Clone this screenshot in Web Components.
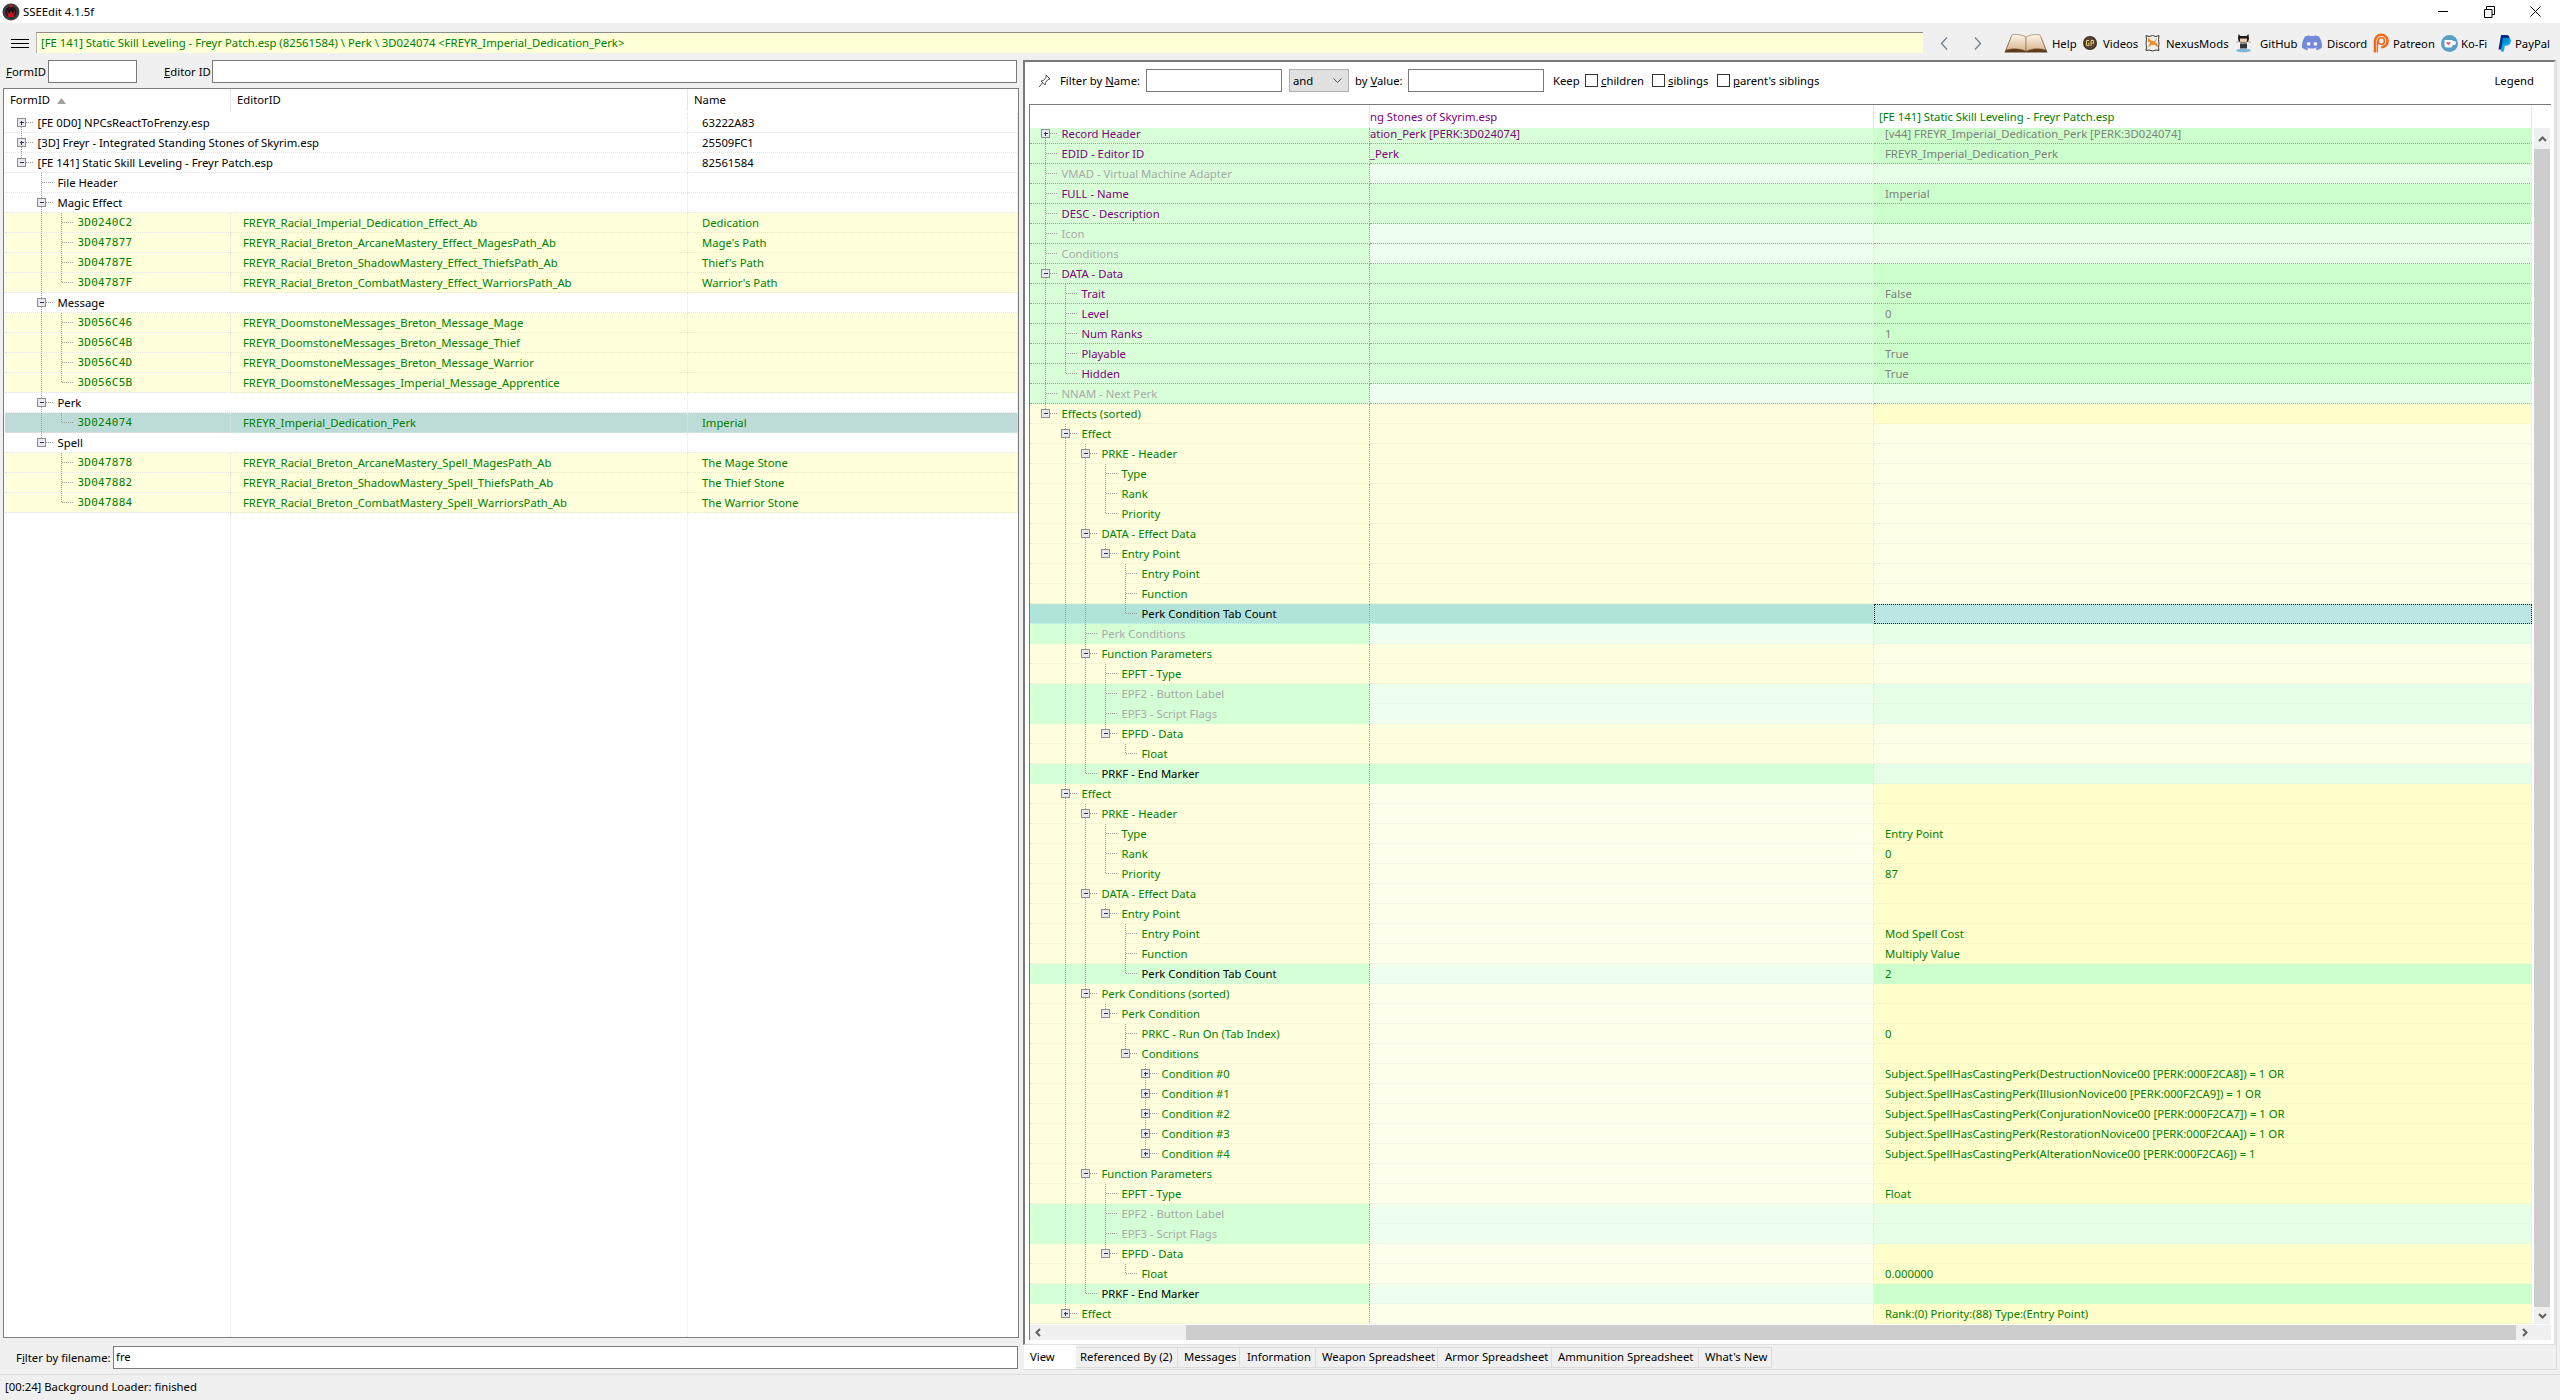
<!doctype html>
<html>
<head>
<meta charset="utf-8">
<title>SSEEdit 4.1.5f</title>
<style>
  html, body { margin: 0; height: 1400px; overflow: hidden; background: #f0f0f0; }
  body { font: 11.3px "Noto Sans", "Open Sans", sans-serif; color: #000; }
</style>
</head>
<body>
<app-shell>
  <win-titlebar></win-titlebar>
  <tool-strip></tool-strip>
  <main-split>
    <left-pane></left-pane>
    <view-pane></view-pane>
  </main-split>
  <status-line>[00:24] Background Loader: finished</status-line>
</app-shell>

<script>
// small base class, every element just stamps its html in an open shadow root
class Base extends HTMLElement {
  constructor() {
    super();
    this.attachShadow({ mode: 'open' });
  }
  connectedCallback() {
    if (!this.shadowRoot.innerHTML) this.shadowRoot.innerHTML = this.html();
    this.ready && this.ready();
  }
}
const simple = (name, html) => customElements.define(name, class extends Base { html() { return html; } });

simple('app-shell', `
  <style>:host { display: flex; flex-direction: column; width: 2560px; height: 1400px; }</style>
  <slot></slot>`);

simple('win-titlebar', `
  <style>
    :host { display: flex; align-items: center; height: 23px; background: #fff; flex: none; }
    svg { display: block; flex: none; }
    .logo { margin: 0 3px 0 2px; }
    .name { flex: 1; }
    .btn { width: 46px; display: flex; justify-content: center; }
  </style>
  <svg class="logo" width="18" height="20" viewBox="0 0 18 20">
    <circle cx="9" cy="10" r="8.5" fill="#3c3c40"/>
    <circle cx="9" cy="10" r="5.5" fill="#1c1416"/>
    <path d="M5 8l2 4 2-3 2 3 2-4-1 7H6z" fill="#c8141e"/>
    <circle cx="9" cy="4" r="1.5" fill="#c8141e"/>
  </svg>
  <span class="name">SSEEdit 4.1.5f</span>
  <div class="btn"><svg width="11" height="11"><path d="M0 5.5h10" stroke="#000"/></svg></div>
  <div class="btn"><svg width="11" height="12"><path d="M2.5 3V.5h8v8H8M.5 3.5h7.500v8h-7.500z" fill="none" stroke="#000"/></svg></div>
  <div class="btn" style="margin-right:2px"><svg width="11" height="11"><path d="M.5.5l10 10M10.500.5l-10 10" stroke="#000"/></svg></div>`);

class IconLink extends Base {
  html() {
    return `
    <style>
      :host { display: flex; align-items: center; flex: none; width: ${this.getAttribute('w')}px; gap: ${this.getAttribute('gap') || 5}px; white-space: nowrap; }
      ::slotted(svg) { display: block; flex: none; }
    </style>
    <slot name="icon"></slot><slot></slot>`;
  }
}
customElements.define('icon-link', IconLink);

simple('tool-strip', `
  <style>
    :host { display: flex; height: 37px; flex: none; background: #f0f0f0; }
    svg { display: block; flex: none; }
    .burger { margin: 16px 7px 0 11px; }
    .crumb {
      width: 1887px; height: 21px; margin-top: 9px; flex: none; box-sizing: border-box;
      background: #ffffd8; color: #008000; border-top: 1px solid #8c8c8c; border-left: 1px solid #b4b4b4;
      padding-left: 4px; line-height: 20px; white-space: nowrap;
    }
    .nav { display: flex; gap: 26px; margin: 14px 0 0 17px; width: 64px; flex: none; }
    .links { display: flex; height: 28px; margin-top: 6px; }
  </style>
  <svg class="burger" width="18" height="10"><path d="M0 .5h18M0 4.500h18M0 8.500h18" stroke="#000"/></svg>
  <div class="crumb">[FE 141] Static Skill Leveling - Freyr Patch.esp (82561584) \\ Perk \\ 3D024074 &lt;FREYR_Imperial_Dedication_Perk&gt;</div>
  <div class="nav">
    <svg width="8" height="13"><path d="M7 .5L1.500 6.500 7 12.500" fill="none" stroke="#6f8094" stroke-width="1.300"/></svg>
    <svg width="8" height="13"><path d="M1 .5l5.500 6L1 12.500" fill="none" stroke="#6f8094" stroke-width="1.300"/></svg>
  </div>
  <div class="links">
    <icon-link w="79" gap="4">
      <svg slot="icon" width="44" height="20" viewBox="0 0 44 20">
        <defs><linearGradient id="pg" x1="0" y1="0" x2="0" y2="1"><stop offset="0" stop-color="#fff6ea"/><stop offset="1" stop-color="#d8b48c"/></linearGradient></defs>
        <path d="M7 4L.5 19.500h43L37 4z" fill="#5c3a1e"/>
        <path d="M22 4C16 1 10 1 8 2L2 17c7-2 14-1.500 20 1z" fill="url(#pg)" stroke="#8a6a48" stroke-width=".6"/>
        <path d="M22 4c6-3 12-3 14-2l6 15c-7-2-14-1.500-20 1z" fill="url(#pg)" stroke="#8a6a48" stroke-width=".6"/>
      </svg>Help</icon-link>
    <icon-link w="62" gap="6">
      <svg slot="icon" width="14" height="16" viewBox="0 0 14 16">
        <circle cx="7" cy="8" r="7" fill="#3a3124"/><circle cx="7" cy="8" r="5.800" fill="#57482f"/>
        <path d="M6 5.500H3.500v5H6V8.300H5M8 10.800V5.500h2.500v2.700H8" fill="none" stroke="#e5c67a" stroke-width="1"/>
      </svg>Videos</icon-link>
    <icon-link w="90" gap="6">
      <svg slot="icon" width="15" height="18" viewBox="0 0 15 18">
        <path d="M1 1.500l3 1 3.500-1 3.500 1 3-1-.5 4 .5 4-.5 4 .5 3-3-.5-3.500 1-3.500-1-3 .5.500-3.500-.5-4 .5-4z" fill="#f4efe6" stroke="#3a3a3a"/>
        <path d="M3 3.500l4 4 1-1 1 1 3-4-2 5 1 1 1-1 1 5-4-3-1 1-1-1-4 3 2-5-1-1-1 1z" fill="#ea8a2a"/>
      </svg>NexusMods</icon-link>
    <icon-link w="67" gap="8">
      <svg slot="icon" width="17" height="20" viewBox="0 0 17 20">
        <path d="M3.500 1l2 2h6l2-2 .5 4.500c0 3-2 4.500-5.500 4.500S3 8.500 3 5.500z" fill="#1c1c1c"/>
        <path d="M5 5.500h7v2.500c0 1-1.500 1.500-3.500 1.500S5 9 5 8z" fill="#eec9a8"/>
        <path d="M5 10.500h7v5H5z" fill="#30343a"/>
        <path d="M1 9h3M13 9h3" stroke="#aaa"/>
        <ellipse cx="8.500" cy="17.500" rx="7.500" ry="1.800" fill="#7fb6d8"/>
      </svg>GitHub</icon-link>
    <icon-link w="71" gap="5">
      <svg slot="icon" width="20" height="16" viewBox="0 0 24 19">
        <path transform="translate(0 -2.800)" fill="#7289da" d="M20.317 4.370a19.790 19.790 0 00-4.885-1.515.074.074 0 00-.079.037c-.211.375-.445.865-.608 1.250-1.845-.276-3.680-.276-5.487 0-.164-.393-.406-.874-.618-1.250a.077.077 0 00-.079-.037 19.736 19.736 0 00-4.885 1.515.070.070 0 00-.032.028C.533 9.046-.319 13.580.099 18.058a.082.082 0 00.031.056c2.053 1.508 4.041 2.423 5.993 3.029a.078.078 0 00.084-.028c.462-.630.873-1.295 1.226-1.994a.076.076 0 00-.042-.106c-.653-.248-1.274-.550-1.872-.892a.077.077 0 01-.008-.128c.126-.094.252-.192.372-.291a.074.074 0 01.078-.011c3.928 1.793 8.180 1.793 12.061 0a.074.074 0 01.079.010c.120.099.246.198.373.292a.077.077 0 01-.007.128c-.598.349-1.220.645-1.873.891a.077.077 0 00-.041.107c.360.698.772 1.363 1.225 1.993a.076.076 0 00.084.029c1.961-.607 3.950-1.522 6.002-3.029a.077.077 0 00.031-.055c.500-5.177-.838-9.674-3.549-13.660a.061.061 0 00-.031-.029z"/>
        <circle cx="8" cy="10.500" r="2.300" fill="#f0f0f0"/><circle cx="16" cy="10.500" r="2.300" fill="#f0f0f0"/>
      </svg>Discord</icon-link>
    <icon-link w="68" gap="4">
      <svg slot="icon" width="16" height="20" viewBox="0 0 16 20">
        <path d="M2 19.500V8a6.300 6.300 0 1 1 6.300 6.300" fill="none" stroke="#f26a1b" stroke-width="2.600"/>
        <circle cx="8.300" cy="8" r="3.200" fill="none" stroke="#f26a1b" stroke-width="1.600"/>
        <path d="M4.500 8v11.500" stroke="#f26a1b" stroke-width="1.200"/>
      </svg>Patreon</icon-link>
    <icon-link w="57" gap="3">
      <svg slot="icon" width="17" height="17" viewBox="0 0 17 17">
        <circle cx="8.500" cy="8.500" r="8.500" fill="#5a9fc4"/>
        <path d="M3.500 5h8v5.500a2 2 0 0 1-2 2h-4a2 2 0 0 1-2-2zM11.500 6h1.500a1.500 1.500 0 0 1 0 4h-1.500z" fill="#fff"/>
        <path d="M7.500 10.500L5.500 8.300c-.6-1 .9-2 2-.8 1.100-1.200 2.600-.2 2 .8z" fill="#f0567a"/>
      </svg>Ko-Fi</icon-link>
    <icon-link w="52" gap="4">
      <svg slot="icon" width="13" height="17" viewBox="0 0 13 17">
        <path d="M3 0h5c3 0 4 2 3.500 4.500C11 7.500 8.800 9 6 9H4.500l-.9 5.500H.5z" fill="#003087"/>
        <path d="M5 3h5.500c2 .3 2.800 2 2.300 4-.6 2.500-2.600 3.800-5 3.800h-1l-.9 5.700H2.700z" fill="#009cde" opacity=".9"/>
      </svg>PayPal</icon-link>
  </div>`);

simple('main-split', `
  <style>:host { display: flex; flex: none; height: 1314px; }</style>
  <slot></slot>`);

simple('text-field', `
  <style>
    :host { display: block; box-sizing: border-box; height: 23px; background: #fff; border: 1px solid #7a7a7a; padding-left: 2px; line-height: 19px; flex: none; }
  </style>
  <slot></slot>`);

class CheckBox extends Base {
  html() {
    return `
    <style>
      :host { display: flex; align-items: center; gap: 3px; flex: none; }
      i { display: block; box-sizing: border-box; width: 13px; height: 13px; background: #fff; border: 1px solid #333; }
    </style>
    <i></i><span><slot></slot></span>`;
  }
}
customElements.define('check-box', CheckBox);

// one grid row of a tree. the gutter svg holds dotted lines and the expander box
class TreeRow extends Base {
  html() {
    const d = this.data;
    const sep = d.sep || '#e4e4e4';
    const gutter = this.gutter();
    const cells = d.span
      ? `<div class="c n span" style="background:${d.bg[0]}">${gutter}<span style="color:${d.color}">${d.name}</span></div>`
      : `<div class="c n" style="background:${d.bg[0]}">${gutter}<span class="${d.mono ? 'mono' : ''}" style="color:${d.color}">${d.name}</span></div>`;
    const v2 = d.v2 ? `<span style="color:${d.c2 || d.color}">${d.v2}</span>` : '';
    const v3 = d.v3 ? `<span style="color:${d.c3 || '#000'}">${d.v3}</span>` : '';
    // the top row of the right tree is scrolled partly under the header
    const short = d.short ? `
      :host { height: 16px; }
      .c { height: 16px; align-items: flex-start; line-height: 12px; }
      .v2, .v3 { overflow: visible; }
      svg { margin-top: -4px; }` : '';
    return `
    <style>
      :host { display: grid; grid-template-columns: var(--cols); height: 20px; }
      .c {
        display: flex; align-items: center; box-sizing: border-box; height: 20px; white-space: nowrap;
        border-bottom: 1px dotted ${sep}; border-right: 1px dotted var(--div2, #e4e4e4); min-width: 0;
      }
      .n { border-right: 1px dotted var(--div1, #e4e4e4); }
      .span { grid-column: span 2; border-right: 1px dotted var(--div2, #e4e4e4); }
      .v2 { padding-left: var(--pad2); overflow: hidden; }
      .v3 { padding-left: var(--pad3); overflow: hidden; }
      .focus { outline: 1px dotted #222; outline-offset: -1px; }
      .mono { font: 11px "DejaVu Sans Mono", monospace; letter-spacing: .25px; }
      svg { display: block; flex: none; margin-bottom: -1px; overflow: visible; }
      ${short}
    </style>
    ${cells}
    ${d.span ? '' : `<div class="c v2" style="background:${d.bg[1]}">${v2}</div>`}
    <div class="c v3 ${d.focus3 ? 'focus' : ''}" style="background:${d.bg[2]}">${v3}</div>`;
  }
  gutter() {
    const d = this.data, c0 = d.c0;
    const w = c0 + 16 + 20 * d.level;
    let s = '';
    const dash = 'stroke="#9a9a9a" stroke-dasharray="1 1" shape-rendering="crispEdges"';
    d.open.forEach((on, k) => {
      const x = c0 + 20 * k;
      if (k < d.level && on) s += `<path d="M${x} 0v20" ${dash}/>`;
      if (k === d.level) {
        const top = d.first ? 10 : 0;
        s += `<path d="M${x} ${top}V${on ? 20 : 10}" ${dash}/>`;
        s += `<path d="M${x} 9.500h12" ${dash}/>`;
      }
    });
    if (d.exp) {
      const x = c0 + 20 * d.level;
      s += `<rect x="${x - 4}" y="5.500" width="8" height="8" fill="#e8e8ec" stroke="#8d8d96" shape-rendering="crispEdges"/>`;
      s += `<path d="M${x - 2} 9.500h4${d.exp === '+' ? `M${x} 7.500v4` : ''}" stroke="#2c2c64" shape-rendering="crispEdges"/>`;
    }
    return `<svg width="${w}" height="20">${s}</svg>`;
  }
}
customElements.define('tree-row', TreeRow);

// lays out a list of rows and works out which dotted verticals continue
function buildRows(host, rows, c0) {
  rows.forEach((r, i) => {
    const open = [];
    for (let k = 0; k <= r.level; k++) {
      let more = false;
      for (let j = i + 1; j < rows.length; j++) {
        if (rows[j].level < k) break;
        if (rows[j].level === k) { more = true; break; }
      }
      open.push(more);
    }
    const el = document.createElement('tree-row');
    el.data = Object.assign({ c0, open, first: i === 0 }, r);
    host.appendChild(el);
  });
}

const GREEN = '#008000', PURPLE = '#800080', GREY = '#a9a9a9', VGREY = '#808080';

const leftRows = (() => {
  const out = [];
  const white = ['#fff', '#fff', '#fff'], yel = ['#ffffdc', '#ffffdc', '#ffffdc'], sel = ['#bddcd8', '#bddcd8', '#bddcd8'];
  const root = (name, exp, v3) => out.push({ level: 0, exp, name, v3, span: true, color: '#000', bg: white });
  const group = (name, exp) => out.push({ level: 1, exp, name, span: true, color: '#000', bg: white });
  const rec = (id, ed, v3, bg) => out.push({ level: 2, name: id, mono: true, v2: ed, v3, color: GREEN, c2: GREEN, c3: GREEN, bg: bg || yel });
  root('[FE 0D0] NPCsReactToFrenzy.esp', '+', '63222A83');
  root('[3D] Freyr - Integrated Standing Stones of Skyrim.esp', '+', '25509FC1');
  root('[FE 141] Static Skill Leveling - Freyr Patch.esp', '-', '82561584');
  group('File Header');
  group('Magic Effect', '-');
  rec('3D0240C2', 'FREYR_Racial_Imperial_Dedication_Effect_Ab', 'Dedication');
  rec('3D047877', 'FREYR_Racial_Breton_ArcaneMastery_Effect_MagesPath_Ab', 'Mage\'s Path');
  rec('3D04787E', 'FREYR_Racial_Breton_ShadowMastery_Effect_ThiefsPath_Ab', 'Thief\'s Path');
  rec('3D04787F', 'FREYR_Racial_Breton_CombatMastery_Effect_WarriorsPath_Ab', 'Warrior\'s Path');
  group('Message', '-');
  rec('3D056C46', 'FREYR_DoomstoneMessages_Breton_Message_Mage');
  rec('3D056C4B', 'FREYR_DoomstoneMessages_Breton_Message_Thief');
  rec('3D056C4D', 'FREYR_DoomstoneMessages_Breton_Message_Warrior');
  rec('3D056C5B', 'FREYR_DoomstoneMessages_Imperial_Message_Apprentice');
  group('Perk', '-');
  rec('3D024074', 'FREYR_Imperial_Dedication_Perk', 'Imperial', sel);
  group('Spell', '-');
  rec('3D047878', 'FREYR_Racial_Breton_ArcaneMastery_Spell_MagesPath_Ab', 'The Mage Stone');
  rec('3D047882', 'FREYR_Racial_Breton_ShadowMastery_Spell_ThiefsPath_Ab', 'The Thief Stone');
  rec('3D047884', 'FREYR_Racial_Breton_CombatMastery_Spell_WarriorsPath_Ab', 'The Warrior Stone');
  return out;
})();

class LeftPane extends Base {
  html() {
    return `
    <style>
      :host { display: flex; flex-direction: column; width: 1023px; flex: none; box-sizing: border-box; padding-left: 3px; }
      .top { display: flex; align-items: center; height: 23px; flex: none; }
      .top span, .bottom span { margin-bottom: 1px; }
      u { text-decoration: underline; }
      .frame {
        margin-top: 5px; width: 1016px; height: 1250px; flex: none; box-sizing: border-box;
        border: 1px solid #7c7c7c; padding: 0 0 0 1px; display: flex; flex-direction: column; background: #fff;
        --cols: 226px 457px 1fr; --pad2: 12px; --pad3: 14px; overflow: hidden;
      }
      .head { display: grid; grid-template-columns: var(--cols); height: 24px; flex: none; line-height: 24px; }
      .head div { border-right: 1px solid #e5e5e5; padding-left: 5px; height: 22px; line-height: 22px; }
      .head div + div { padding-left: 6px; }
      .head svg { margin-left: 7px; }
      .rows { display: flex; flex-direction: column; flex: none; }
      .fill { flex: 1; display: grid; grid-template-columns: var(--cols); }
      .fill div { border-right: 1px dotted #e8e8e8; }
      .bottom { display: flex; align-items: center; margin-top: 8px; height: 23px; flex: none; }
    </style>
    <div class="top">
      <span style="margin-left:3px;margin-right:3px;width:39px"><u>F</u>ormID</span>
      <text-field style="width:89px"></text-field>
      <span style="margin-left:27px;width:48px"><u>E</u>ditor ID</span>
      <text-field style="width:805px"></text-field>
    </div>
    <div class="frame">
      <div class="head">
        <div>FormID<svg width="9" height="6"><path d="M0 6L4.500 0 9 6z" fill="#a0a0a0"/></svg></div>
        <div>EditorID</div>
        <div style="border:0">Name</div>
      </div>
      <div class="rows"></div>
      <div class="fill"><div></div><div></div></div>
    </div>
    <div class="bottom">
      <span style="margin-left:13px;width:97px">F<u>i</u>lter by filename:</span>
      <text-field style="width:905px">fre</text-field>
    </div>`;
  }
  ready() {
    const host = this.shadowRoot.querySelector('.rows');
    if (!host.children.length) buildRows(host, leftRows, 16.5);
  }
}
customElements.define('left-pane', LeftPane);

const rightRows = (() => {
  const out = [];
  const k = {
    topG: [PURPLE, ['#d8ffd8', '#d8ffd8', '#ccffcc']],
    topP: [GREY, ['#d8ffd8', '#eeffee', '#e8ffe8']],
    upY: [GREEN, ['#ffffde', '#ffffe0', '#ffffe8']],
    upP: [GREY, ['#d5ffd5', '#eeffee', '#e6ffe6']],
    upEnd: ['#000', ['#d5ffd5', '#d5ffd5', '#e6ffe6']],
    sel: ['#000', ['#b0e4d8', '#b0e4d8', '#bce6e4']],
    head: [GREEN, ['#ffffde', '#ffffde', '#ffffcc']],
    loY: [GREEN, ['#ffffde', '#ffffee', '#ffffcc']],
    loP: [GREY, ['#d5ffd5', '#eeffee', '#e6ffe6']],
    loEnd: ['#000', ['#d5ffd5', '#eeffee', '#ccffcc']],
  };
  const r = (kind, level, exp, name, v3, v2) => {
    const [color, bg] = k[kind];
    const top = kind.startsWith('top');
    out.push({ level, exp, name, color, bg, v2, v3, c2: PURPLE, c3: top ? VGREY : GREEN, sep: top || name.startsWith('NNAM') ? '#a0a0a0' : '#e9e9e9', focus3: kind === 'sel', short: out.length === 0 });
  };
  r('topG', 0, '+', 'Record Header', '[v44] FREYR_Imperial_Dedication_Perk [PERK:3D024074]', 'ation_Perk [PERK:3D024074]');
  r('topG', 0, '', 'EDID - Editor ID', 'FREYR_Imperial_Dedication_Perk', '_Perk');
  r('topP', 0, '', 'VMAD - Virtual Machine Adapter');
  r('topG', 0, '', 'FULL - Name', 'Imperial');
  r('topG', 0, '', 'DESC - Description');
  r('topP', 0, '', 'Icon');
  r('topP', 0, '', 'Conditions');
  r('topG', 0, '-', 'DATA - Data');
  r('topG', 1, '', 'Trait', 'False');
  r('topG', 1, '', 'Level', '0');
  r('topG', 1, '', 'Num Ranks', '1');
  r('topG', 1, '', 'Playable', 'True');
  r('topG', 1, '', 'Hidden', 'True');
  r('topP', 0, '', 'NNAM - Next Perk');
  r('head', 0, '-', 'Effects (sorted)');
  // first effect, nothing in the right column
  r('upY', 1, '-', 'Effect');
  r('upY', 2, '-', 'PRKE - Header');
  r('upY', 3, '', 'Type');
  r('upY', 3, '', 'Rank');
  r('upY', 3, '', 'Priority');
  r('upY', 2, '-', 'DATA - Effect Data');
  r('upY', 3, '-', 'Entry Point');
  r('upY', 4, '', 'Entry Point');
  r('upY', 4, '', 'Function');
  r('sel', 4, '', 'Perk Condition Tab Count');
  r('upP', 2, '', 'Perk Conditions');
  r('upY', 2, '-', 'Function Parameters');
  r('upY', 3, '', 'EPFT - Type');
  r('upP', 3, '', 'EPF2 - Button Label');
  r('upP', 3, '', 'EPF3 - Script Flags');
  r('upY', 3, '-', 'EPFD - Data');
  r('upY', 4, '', 'Float');
  r('upEnd', 2, '', 'PRKF - End Marker');
  // second effect
  r('loY', 1, '-', 'Effect');
  r('loY', 2, '-', 'PRKE - Header');
  r('loY', 3, '', 'Type', 'Entry Point');
  r('loY', 3, '', 'Rank', '0');
  r('loY', 3, '', 'Priority', '87');
  r('loY', 2, '-', 'DATA - Effect Data');
  r('loY', 3, '-', 'Entry Point');
  r('loY', 4, '', 'Entry Point', 'Mod Spell Cost');
  r('loY', 4, '', 'Function', 'Multiply Value');
  r('loEnd', 4, '', 'Perk Condition Tab Count', '2');
  r('loY', 2, '-', 'Perk Conditions (sorted)');
  r('loY', 3, '-', 'Perk Condition');
  r('loY', 4, '', 'PRKC - Run On (Tab Index)', '0');
  r('loY', 4, '-', 'Conditions');
  r('loY', 5, '+', 'Condition #0', 'Subject.SpellHasCastingPerk(DestructionNovice00 [PERK:000F2CA8]) = 1 OR');
  r('loY', 5, '+', 'Condition #1', 'Subject.SpellHasCastingPerk(IllusionNovice00 [PERK:000F2CA9]) = 1 OR');
  r('loY', 5, '+', 'Condition #2', 'Subject.SpellHasCastingPerk(ConjurationNovice00 [PERK:000F2CA7]) = 1 OR');
  r('loY', 5, '+', 'Condition #3', 'Subject.SpellHasCastingPerk(RestorationNovice00 [PERK:000F2CAA]) = 1 OR');
  r('loY', 5, '+', 'Condition #4', 'Subject.SpellHasCastingPerk(AlterationNovice00 [PERK:000F2CA6]) = 1');
  r('loY', 2, '-', 'Function Parameters');
  r('loY', 3, '', 'EPFT - Type', 'Float');
  r('loP', 3, '', 'EPF2 - Button Label');
  r('loP', 3, '', 'EPF3 - Script Flags');
  r('loY', 3, '-', 'EPFD - Data');
  r('loY', 4, '', 'Float', '0.000000');
  r('loEnd', 2, '', 'PRKF - End Marker');
  r('loY', 1, '+', 'Effect', 'Rank:(0) Priority:(88) Type:(Entry Point)');
  return out;
})();

simple('v-scroll', `
  <style>
    :host { display: flex; flex-direction: column; width: 16px; flex: none; background: #f0f0f0; height: 1196px; margin-left: 2px; }
    .a { height: 21px; flex: none; display: flex; align-items: center; justify-content: center; }
    .t { flex: 1; background: #cdcdcd; }
    svg { display: block; }
  </style>
  <div class="a"><svg width="9" height="6"><path d="M1 5l3.500-3.500L8 5" fill="none" stroke="#606060" stroke-width="2"/></svg></div>
  <div class="t"></div>
  <div class="a" style="height:17px"><svg width="9" height="6"><path d="M1 1l3.500 3.500L8 1" fill="none" stroke="#606060" stroke-width="2"/></svg></div>`);

simple('h-scroll', `
  <style>
    :host { display: flex; height: 15px; flex: none; background: #f0f0f0; margin-top: 1px; }
    .a { flex: none; display: flex; align-items: center; }
    .t { width: 1330px; background: #cdcdcd; flex: none; }
    svg { display: block; }
  </style>
  <div class="a" style="width:156px;padding-left:5px;box-sizing:border-box"><svg width="6" height="9"><path d="M5 1L1.500 4.500 5 8" fill="none" stroke="#606060" stroke-width="2"/></svg></div>
  <div class="t"></div>
  <div class="a" style="padding-left:6px"><svg width="6" height="9"><path d="M1 1l3.500 3.500L1 8" fill="none" stroke="#606060" stroke-width="2"/></svg></div>`);

class PageTabs extends Base {
  html() {
    const tabs = [['Referenced By (2)', 102, 4], ['Messages', 62, 6], ['Information', 76, 7], ['Weapon Spreadsheet', 122, 6], ['Armor Spreadsheet', 114, 7], ['Ammunition Spreadsheet', 147, 6], ["What's New", 73, 6]];
    return `
    <style>
      :host { display: flex; flex: none; height: 25px; padding-left: 1px; box-sizing: border-box; border-bottom: 1px solid #dcdcdc; }
      .on { width: 52px; height: 24px; background: #fff; padding-left: 6px; box-sizing: border-box; line-height: 23px; flex: none; }
      .t { height: 21px; margin-top: 2px; box-sizing: border-box; border: 1px solid #dcdcdc; border-left: 0; line-height: 17px; flex: none; white-space: nowrap; }
    </style>
    <div class="on">View</div>
    ${tabs.map(([n, w, p]) => `<div class="t" style="width:${w}px;padding-left:${p}px">${n}</div>`).join('')}`;
  }
}
customElements.define('page-tabs', PageTabs);

class ViewPane extends Base {
  html() {
    return `
    <style>
      :host { display: flex; flex-direction: column; width: 1534px; height: 1310px; flex: none; box-sizing: border-box; border-right: 1px solid #dcdcdc; margin-right: 3px; }
      .page {
        height: 1285px; flex: none; box-sizing: border-box; background: #fff;
        border-top: 2px solid #7a7a7a; border-left: 2px solid #7a7a7a; border-right: 2px solid #e4e4e4; border-bottom: 1px solid #e0e0e0;
        padding: 0 3px 0 4px;
      }
      .filter { display: flex; align-items: center; height: 42px; box-sizing: border-box; padding-bottom: 5px; white-space: nowrap; }
      .filter svg { display: block; flex: none; }
      .combo { display: flex; align-items: center; justify-content: space-between; box-sizing: border-box; width: 60px; height: 23px; margin: 0 6px 0 7px; background: #e1e1e1; border: 1px solid #adadad; padding: 0 6px 0 3px; flex: none; }
      .tree {
        border-top: 1px solid #7a7a7a; border-left: 1px solid #7a7a7a; box-sizing: border-box;
        --cols: 340px 504px 658px; --pad2: 0px; --pad3: 11px; --div1: #a0a0a0; --div2: #e4e4e4;
      }
      .hdr { display: grid; grid-template-columns: 340px 504px 658px 19px; height: 23px; }
      .hdr div { border-right: 1px solid #e4e4e4; line-height: 23px; white-space: nowrap; overflow: hidden; }
      .body { display: flex; height: 1196px; }
      .rows { flex: none; display: flex; flex-direction: column; }
      u { text-decoration: underline; }
    </style>
    <div class="page">
      <div class="filter">
        <svg style="margin:0 9px 0 9px" width="13" height="14" viewBox="0 0 13 14"><path d="M8 1l4 4-2 .5L7.500 8.500 7 11 3 7l2.500-.5L8 3.500zM4.500 9L1 13" fill="none" stroke="#505050"/></svg>
        <span style="width:86px">Filter by <u>N</u>ame:</span>
        <text-field style="width:136px"></text-field>
        <div class="combo">and<svg width="9" height="6"><path d="M.5.5l4 4 4-4" fill="none" stroke="#505050"/></svg></div>
        <span style="width:53px">by <u>V</u>alue:</span>
        <text-field style="width:136px"></text-field>
        <span style="margin:0 10px 0 9px;width:22px">Keep</span>
        <check-box style="width:67px"><u>c</u>hildren</check-box>
        <check-box style="width:65px"><u>s</u>iblings</check-box>
        <check-box><u>p</u>arent's siblings</check-box>
        <span style="margin-left:auto;margin-right:17px">Legend</span>
      </div>
      <div class="tree">
        <div class="hdr">
          <div></div>
          <div style="color:${PURPLE}">ng Stones of Skyrim.esp</div>
          <div style="color:${GREEN};padding-left:5px;box-sizing:border-box">[FE 141] Static Skill Leveling - Freyr Patch.esp</div>
          <div style="border:0"></div>
        </div>
        <div class="body">
          <div class="rows"></div>
          <v-scroll></v-scroll>
        </div>
        <h-scroll></h-scroll>
      </div>
    </div>
    <page-tabs></page-tabs>`;
  }
  ready() {
    const host = this.shadowRoot.querySelector('.rows');
    if (!host.children.length) buildRows(host, rightRows, 15.5);
  }
}
customElements.define('view-pane', ViewPane);

simple('status-line', `
  <style>
    :host { display: block; flex: none; height: 26px; box-sizing: border-box; border-top: 1px solid #dcdcdc; padding-left: 5px; line-height: 24px; background: #f0f0f0; }
  </style>
  <slot></slot>`);
</script>
</body>
</html>
